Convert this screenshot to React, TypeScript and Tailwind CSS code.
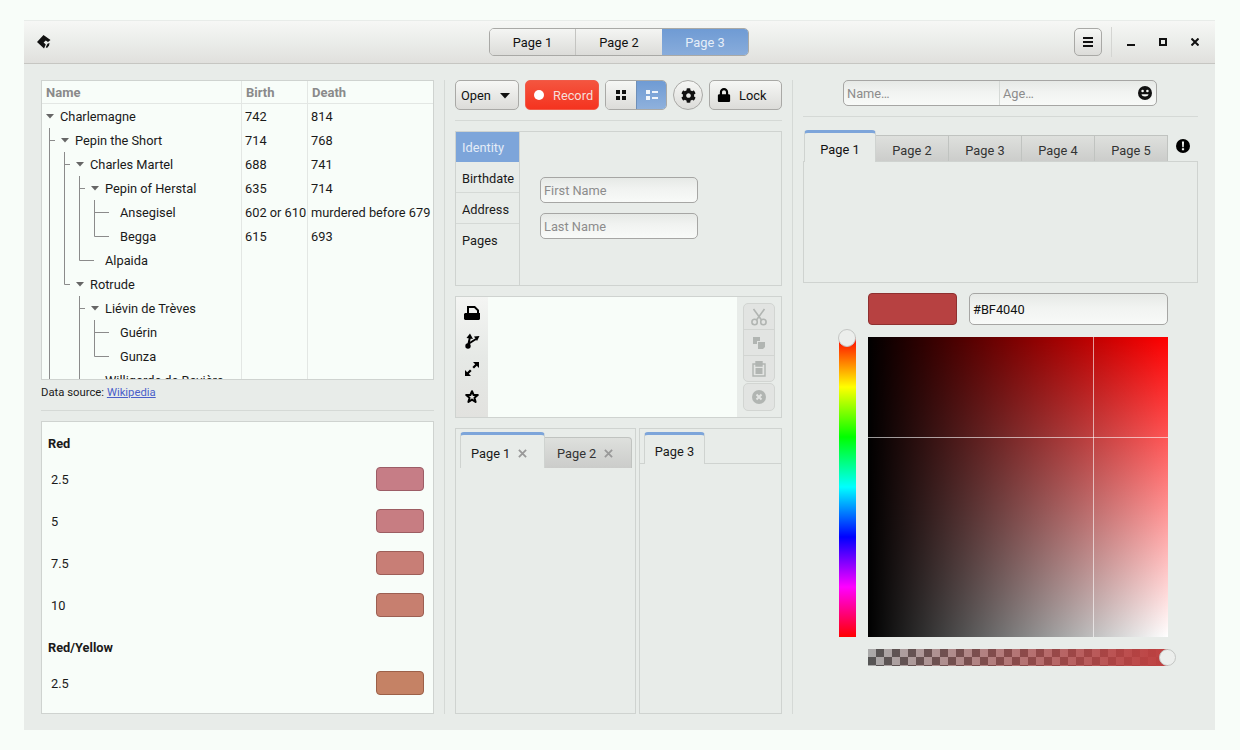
import { FaCog, FaLock } from 'react-icons/fa'

const btn =
  "flex items-center h-[30px] rounded-[5px] border border-[#a9a9a6] bg-[linear-gradient(to_bottom,#f6f7f5,#dcdcd9)] pt-[2px] text-[#111]"
const entry =
  "rounded-[5px] border border-[#a6a6a4] bg-[linear-gradient(to_bottom,#e6e9e6,#f1f3f1_45%,#f8faf8)] px-[3px] text-[12.8px] text-[#111] placeholder:text-[#8c8c8c] outline-none"
const inactiveTab =
  "flex items-center border border-b-0 border-[#c0c3c0] bg-[linear-gradient(to_bottom,#dee0dd,#cbccca)] text-[#333]"

type Guide = 'I' | 'T' | 'S' | 'L' | 'LS' | '' | 'arrow' | 'dash'

interface TreeRow {
  name: string
  birth?: string
  death?: string
  guides: Guide[]
}

const rows: TreeRow[] = [
  { name: 'Charlemagne', birth: '742', death: '814', guides: ['arrow'] },
  { name: 'Pepin the Short', birth: '714', death: '768', guides: ['S', 'arrow'] },
  { name: 'Charles Martel', birth: '688', death: '741', guides: ['I', 'S', 'arrow'] },
  { name: 'Pepin of Herstal', birth: '635', death: '714', guides: ['I', 'I', 'S', 'arrow'] },
  { name: 'Ansegisel', birth: '602 or 610', death: 'murdered before 679', guides: ['I', 'I', 'I', 'T', 'dash'] },
  { name: 'Begga', birth: '615', death: '693', guides: ['I', 'I', 'I', 'L', 'dash'] },
  { name: 'Alpaida', guides: ['I', 'I', 'L', 'dash'] },
  { name: 'Rotrude', guides: ['I', 'LS', 'arrow'] },
  { name: 'Liévin de Trèves', guides: ['I', '', 'S', 'arrow'] },
  { name: 'Guérin', guides: ['I', '', 'I', 'T', 'dash'] },
  { name: 'Gunza', guides: ['I', '', 'I', 'L', 'dash'] },
  { name: 'Willigarde de Bavière', guides: ['I', '', 'L', 'dash'] },
]

const swatches = [
  { label: '2.5', fill: 'bg-[#c67d86] border-[#9c5d66]' },
  { label: '5', fill: 'bg-[#c77d82] border-[#9c5d62]' },
  { label: '7.5', fill: 'bg-[#c87e76] border-[#9d5e58]' },
  { label: '10', fill: 'bg-[#c77f6f] border-[#9c5f52]' },
]

function GuideCell({ kind }: { kind: Guide }) {
  const line = '#8b8b8b'
  return (
    <svg width="15" height="24" viewBox="0 0 15 24" className="shrink-0">
      {(kind === 'I' || kind === 'T' || kind === 'S') && <path d="M6.5 0V24" stroke={line} />}
      {(kind === 'L' || kind === 'LS') && <path d="M6.5 0V12.5" stroke={line} />}
      {(kind === 'T' || kind === 'L') && <path d="M6.5 12.5H15" stroke={line} />}
      {(kind === 'S' || kind === 'LS') && <path d="M6.5 12.5H12" stroke={line} />}
      {kind === 'dash' && <path d="M0 12.5H6" stroke={line} />}
      {kind === 'arrow' && <path d="M3 10H11L7 14.5Z" fill="#666" />}
    </svg>
  )
}

function ScissorsIcon() {
  return (
    <svg width="16" height="18" viewBox="0 0 16 18" fill="none" stroke="#b1b5b2" strokeWidth="1.6">
      <path d="M2.5 1L10.5 12M13.5 1L5.5 12" />
      <circle cx="3.6" cy="14" r="2.7" />
      <circle cx="12.4" cy="14" r="2.7" />
    </svg>
  )
}

function TabClose() {
  return (
    <svg width="9" height="9" viewBox="0 0 10 10" fill="none" stroke="#999" strokeWidth="2">
      <path d="M1 1L9 9M9 1L1 9" />
    </svg>
  )
}

function App() {
  return (
    <div className="h-[750px] w-[1240px] overflow-hidden bg-[#f8fdf9] pt-[20px] pl-[24px] font-['Roboto',sans-serif] text-[12.8px] text-[#1a1a1a]">
      <div className="flex h-[710px] w-[1191px] flex-col bg-[#e8ece9]">
        {/* Title bar */}
        <header className="grid h-[44px] shrink-0 grid-cols-[1fr_auto_1fr] items-center border-t border-b border-t-[#e8ece9] border-b-[#c6c6c2] bg-[linear-gradient(to_bottom,#f6f7f5,#eceeeb_45%,#e0e0dd)]">
          <svg width="16" height="16" viewBox="0 0 16 16" fill="#111" className="ml-[12px]">
            <path d="M7.5 1L14.5 6L12 8L9.8 6.4L7.6 8.6L9.8 10.6L8 14.5L1 8Z" />
            <path d="M11.5 9.8L13.5 9L13 11.5L11 14L9.8 13.2Z" />
          </svg>
          <div className="mr-px flex h-[28px] w-[260px] overflow-hidden rounded-[5px] border border-[#a9a9a6]">
            <div className="flex w-[86px] items-center justify-center border-r border-[#c4c4c1] bg-[linear-gradient(to_bottom,#f4f5f3,#dcdcd9)] pt-[2px] text-[#111]">Page 1</div>
            <div className="flex w-[86px] items-center justify-center bg-[linear-gradient(to_bottom,#f4f5f3,#dcdcd9)] pt-[2px] text-[#111]">Page 2</div>
            <div className="flex flex-1 items-center justify-center bg-[linear-gradient(to_bottom,#6f9bd4,#88acdb)] pt-[2px] text-[#e6eef8]">Page 3</div>
          </div>
          <div className="flex items-center justify-end">
            <button className="flex h-[28px] w-[28px] items-center justify-center rounded-[5px] border border-[#a9a9a6] bg-[linear-gradient(to_bottom,#f6f7f5,#dcdcd9)]">
              <svg width="12" height="12" viewBox="0 0 12 12" fill="#111">
                <path d="M1 1H11V3H1ZM1 5H11V7H1ZM1 9H11V11H1Z" />
              </svg>
            </button>
            <div className="ml-[9px] h-[30px] w-px bg-[#d4d5d2]" />
            <svg width="8" height="8" viewBox="0 0 8 8" className="ml-[15px]" fill="#111"><path d="M0 6H8V8H0Z" /></svg>
            <svg width="8" height="8" viewBox="0 0 8 8" className="ml-[24px]" fill="none" stroke="#111" strokeWidth="2"><path d="M1 1H7V7H1Z" /></svg>
            <svg width="8" height="8" viewBox="0 0 8 8" className="mr-[16px] ml-[24px]" fill="none" stroke="#111" strokeWidth="2"><path d="M0.5 0.5L7.5 7.5M7.5 0.5L0.5 7.5" /></svg>
          </div>
        </header>

        <main className="flex min-h-0 flex-1 pt-[16px] pr-[17px] pb-[16px] pl-[17px]">
          {/* Left column */}
          <section className="flex w-[393px] shrink-0 flex-col">
            <div className="flex h-[300px] shrink-0 overflow-hidden border border-[#cfd3d0] bg-[#f8fdf9]">
              <div className="w-[200px] shrink-0 border-r border-[#e3e7e4]">
                <div className="flex h-[23px] items-center border-b border-[#e3e7e4] pt-[2px] pl-[4px] text-[13px] font-bold text-[#8a8a8a]">Name</div>
                <div className="pl-[1px]">
                  {rows.map(r => (
                    <div key={r.name} className="flex h-6 items-center">
                      {r.guides.map((g, i) => <GuideCell key={i} kind={g} />)}
                      <span className="ml-[2px] pt-[2px] whitespace-nowrap">{r.name}</span>
                    </div>
                  ))}
                </div>
              </div>
              <div className="w-[66px] shrink-0 border-r border-[#e3e7e4]">
                <div className="flex h-[23px] items-center border-b border-[#e3e7e4] pt-[2px] pl-[4px] text-[13px] font-bold text-[#8a8a8a]">Birth</div>
                {rows.map(r => (
                  <div key={r.name} className="flex h-6 items-center pt-[2px] pl-[3px] whitespace-nowrap">{r.birth}</div>
                ))}
              </div>
              <div className="min-w-0 flex-1">
                <div className="flex h-[23px] items-center border-b border-[#e3e7e4] pt-[2px] pl-[4px] text-[13px] font-bold text-[#8a8a8a]">Death</div>
                {rows.map(r => (
                  <div key={r.name} className="flex h-6 items-center pt-[2px] pl-[3px] whitespace-nowrap">{r.death}</div>
                ))}
              </div>
            </div>
            <p className="mt-[5px] h-[15px] text-[11.3px] leading-[15px]">
              Data source: <span className="text-[#4a5fc9] underline">Wikipedia</span>
            </p>
            <div className="mt-[10px] h-px shrink-0 bg-[#d5d9d6]" />
            <div className="mt-[10px] flex min-h-0 flex-1 flex-col overflow-hidden border border-[#cfd3d0] bg-[#f8fdf9] pr-[9px] pl-[6px]">
              <div className="mt-[14px] h-[16px] leading-[16px] font-bold">Red</div>
              <div className="mt-[15px] flex flex-col gap-[18px]">
                {swatches.map(s => (
                  <div key={s.label} className="flex h-[24px] items-center justify-between pl-[3px]">
                    <span className="pt-[2px]">{s.label}</span>
                    <div className={`h-[24px] w-[48px] rounded-[4px] border ${s.fill}`} />
                  </div>
                ))}
              </div>
              <div className="mt-[23px] h-[16px] leading-[16px] font-bold">Red/Yellow</div>
              <div className="mt-[15px] flex h-[24px] items-center justify-between pl-[3px]">
                <span className="pt-[2px]">2.5</span>
                <div className="h-[24px] w-[48px] rounded-[4px] border border-[#9c6048] bg-[#c58265]" />
              </div>
            </div>
          </section>

          <div className="mx-[10px] w-px shrink-0 bg-[#d5d9d6]" />

          {/* Middle column */}
          <section className="flex w-[327px] shrink-0 flex-col">
            <div className="flex h-[30px] shrink-0 items-center gap-[6px]">
              <button className={`${btn} w-[64px] gap-[9px] pl-[5px]`}>
                Open
                <svg width="10" height="6" viewBox="0 0 10 6" fill="#111"><path d="M0 0H10L5 5.5Z" /></svg>
              </button>
              <button className="flex h-[30px] w-[74px] items-center gap-[9px] rounded-[5px] border border-[#f05a48] bg-[linear-gradient(to_bottom,#f4553f,#f5331f)] pl-[8px] text-[#f5dfd9]">
                <span className="h-[10px] w-[10px] rounded-full bg-white" />
                <span className="pt-[2px]">Record</span>
              </button>
              <div className="flex h-[30px] w-[62px] overflow-hidden rounded-[5px] border border-[#a9a9a6]">
                <div className="flex w-[30px] items-center justify-center bg-[linear-gradient(to_bottom,#f6f7f5,#dcdcd9)]">
                  <svg width="10" height="10" viewBox="0 0 10 10" fill="#111"><path d="M0 0H4V4H0ZM6 0H10V4H6ZM0 6H4V10H0ZM6 6H10V10H6Z" /></svg>
                </div>
                <div className="flex flex-1 items-center justify-center border-l border-[#6e8fb8] bg-[linear-gradient(to_bottom,#6f9bd4,#8fb1dc)]">
                  <svg width="12" height="10" viewBox="0 0 12 10" fill="#f2f6fb"><path d="M0 0H4V4H0ZM0 6H4V10H0ZM6 1H12V3H6ZM6 7H12V9H6Z" /></svg>
                </div>
              </div>
              <button className="flex h-[30px] w-[30px] items-center justify-center rounded-full border border-[#a9a9a6] bg-[linear-gradient(to_bottom,#f6f7f5,#dcdcd9)]">
                <FaCog size={15} color="#111" />
              </button>
              <button className={`${btn} w-[73px] pl-[7px]`}>
                <span className="mt-[-2px]"><FaLock size={14} color="#000" /></span>
                <span className="ml-[8px]">Lock</span>
              </button>
            </div>
            <div className="mt-[10px] h-px shrink-0 bg-[#d5d9d6]" />

            <div className="mt-[10px] flex h-[155px] shrink-0 border border-[#cfd3d0]">
              <div className="w-[64px] shrink-0 border-r border-[#cfd3d0]">
                <div className="flex h-[30px] items-center bg-[#7da5da] pt-[2px] pl-[6px] text-[#e4ecf7]">Identity</div>
                <div className="flex h-[31px] items-center border-b border-[#d5d9d6] pt-[3px] pl-[6px]">Birthdate</div>
                <div className="flex h-[31px] items-center border-b border-[#d5d9d6] pt-[3px] pl-[6px]">Address</div>
                <div className="flex h-[31px] items-center pt-[2px] pl-[6px]">Pages</div>
              </div>
              <div className="flex flex-1 flex-col justify-center gap-[10px] pb-[2px] pl-[20px]">
                <input className={`${entry} h-[26px] w-[158px] pt-[2px]`} placeholder="First Name" />
                <input className={`${entry} h-[26px] w-[158px] pt-[2px]`} placeholder="Last Name" />
              </div>
            </div>

            <div className="mt-[10px] flex h-[122px] shrink-0 border border-[#cfd3d0]">
              <div className="flex w-[32px] shrink-0 flex-col items-center bg-[linear-gradient(to_bottom,#f4f5f3,#e6e9e6_50%,#e2e2df)] pt-[2px]">
                <div className="flex h-[28px] items-center">
                  <svg width="16" height="16" viewBox="0 0 16 16" fill="#000">
                    <path fillRule="evenodd" d="M3 8V1H11L15 5V8H16V14L15 15H1L0 14V9L1 8ZM5 8H13V5.8L10.2 3H5Z" />
                  </svg>
                </div>
                <div className="flex h-[28px] items-center">
                  <svg width="16" height="16" viewBox="0 0 16 16" fill="#000">
                    <circle cx="4" cy="13" r="2.7" />
                    <path d="M4 13L6 4M5 10.5L12 6" stroke="#000" strokeWidth="2" fill="none" />
                    <path d="M2.5 5L6 0.5L9 6Z" />
                    <path d="M10 3.5L15.5 3L13 8Z" />
                  </svg>
                </div>
                <div className="flex h-[28px] items-center">
                  <svg width="16" height="16" viewBox="0 0 16 16" fill="#000">
                    <path d="M9 1H15V7L12.8 4.8L10 7.6L8.4 6L11.2 3.2ZM1 15V9L3.2 11.2L6 8.4L7.6 10L4.8 12.8L7 15Z" />
                  </svg>
                </div>
                <div className="flex h-[28px] items-center">
                  <svg width="16" height="16" viewBox="0 0 16 16" fill="none" stroke="#000" strokeWidth="2" strokeLinejoin="round">
                    <path d="M8 2.2L9.6 6H13.8L10.5 8.8L11.6 13L8 10.6L4.4 13L5.5 8.8L2.2 6H6.4Z" />
                  </svg>
                </div>
              </div>
              <div className="flex-1 bg-[#f8fdf9]" />
              <div className="flex w-[44px] shrink-0 flex-col items-center pt-[6px] pr-[1px]">
                <div className="flex w-[32px] flex-col overflow-hidden rounded-[5px] border border-[#d2d5d2] bg-[#e2e4e2]">
                  <div className="flex h-[26px] items-center justify-center border-b border-[#d2d5d2]"><ScissorsIcon /></div>
                  <div className="flex h-[26px] items-center justify-center border-b border-[#d2d5d2]">
                    <svg width="14" height="14" viewBox="0 0 14 14" fill="#b1b5b2"><path d="M1 1H8V5H5V8H1Z" /><path d="M6 6H13V11L11 13H6Z" /></svg>
                  </div>
                  <div className="flex h-[25px] items-center justify-center">
                    <svg width="14" height="16" viewBox="0 0 14 16" fill="none" stroke="#b1b5b2" strokeWidth="1.4"><path d="M1 3H13V15H1Z" /><path d="M4 5H10V0.8H4Z" fill="#b1b5b2" /><path d="M3.5 7H10.5V13H3.5Z" fill="#b1b5b2" stroke="none" /></svg>
                  </div>
                </div>
                <div className="mt-px flex h-[28px] w-[32px] items-center justify-center rounded-[5px] border border-[#d2d5d2] bg-[#e2e4e2]">
                  <svg width="14" height="14" viewBox="0 0 14 14"><circle cx="7" cy="7" r="7" fill="#b1b5b2" /><path d="M4.5 4.5L9.5 9.5M9.5 4.5L4.5 9.5" stroke="#e2e4e2" strokeWidth="2" /></svg>
                </div>
              </div>
            </div>

            <div className="mt-[10px] flex min-h-0 flex-1 gap-[3px]">
              <div className="w-[181px] shrink-0 border border-[#cfd3d0] pt-[3px] pl-[4px]">
                <div className="flex h-[36px] items-end">
                  <div className="flex h-[36px] w-[85px] items-center gap-[8px] rounded-t-[4px] border-x border-t-[3px] border-x-[#cfd3d0] border-t-[#7da5da] pt-[4px] pl-[10px]">
                    Page 1
                    <TabClose />
                  </div>
                  <div className={`${inactiveTab} h-[31px] w-[87px] gap-[8px] rounded-tr-[4px] border-l-0 pt-[1px] pl-[12px]`}>
                    Page 2
                    <TabClose />
                  </div>
                </div>
              </div>
              <div className="min-w-0 flex-1 border border-[#cfd3d0]">
                <div className="flex h-[35px] items-end border-b border-[#cfd3d0] pl-[4px]">
                  <div className="mb-[-1px] flex h-[32px] w-[61px] items-center justify-center rounded-t-[4px] border-x border-t-[3px] border-x-[#cfd3d0] border-t-[#7da5da] bg-[#e8ece9] pt-[5px]">Page 3</div>
                </div>
              </div>
            </div>
          </section>

          <div className="mx-[10px] w-px shrink-0 bg-[#d5d9d6]" />

          {/* Right column */}
          <section className="flex w-[395px] shrink-0 flex-col">
            <div className="ml-[40px] flex h-[26px] w-[314px] shrink-0 items-center rounded-[5px] border border-[#a6a6a4] bg-[linear-gradient(to_bottom,#e6e9e6,#f1f3f1_45%,#f8faf8)] text-[#8c8c8c]">
              <span className="w-[156px] border-r border-[#d5d9d6] pt-[2px] pl-[3px] leading-[22px]">Name…</span>
              <span className="flex-1 pt-[2px] pl-[3px] leading-[22px]">Age…</span>
              <svg width="14" height="14" viewBox="0 0 14 14" className="mr-[4px]">
                <circle cx="7" cy="7" r="7" fill="#111" />
                <circle cx="4.6" cy="5" r="1.3" fill="#f4f6f4" />
                <circle cx="9.4" cy="5" r="1.3" fill="#f4f6f4" />
                <path d="M3.5 8.3H10.5C10.2 9.6 9 10.6 7 10.6C5 10.6 3.8 9.6 3.5 8.3Z" fill="#f4f6f4" />
              </svg>
            </div>
            <div className="mt-[10px] h-px shrink-0 bg-[#d5d9d6]" />

            <div className="mt-[13px] flex h-[32px] shrink-0 items-end pl-px">
              <div className="relative z-10 flex h-[32px] w-[72px] items-center justify-center rounded-t-[4px] border-x border-t-[3px] border-x-[#cfd3d0] border-t-[#7da5da] bg-[#e8ece9] pt-[4px] text-[#111]">Page 1</div>
              {['Page 2', 'Page 3', 'Page 4', 'Page 5'].map(p => (
                <div key={p} className={`${inactiveTab} h-[27px] w-[73px] justify-center border-l-0 pt-[3px]`}>{p}</div>
              ))}
              <svg width="14" height="14" viewBox="0 0 14 14" className="mb-[9px] ml-[8px]">
                <circle cx="7" cy="7" r="7" fill="#000" />
                <path d="M5.9 2.6H8.1L7.7 8.2H6.3ZM5.9 9.2H8.1V11.3H5.9Z" fill="#f4f6f4" />
              </svg>
            </div>
            <div className="mt-[-1px] h-[122px] shrink-0 border border-[#cfd3d0]" />

            <div className="mt-[10px] flex shrink-0 pl-[65px]">
              <div className="h-[32px] w-[89px] rounded-[4px] border border-[#8e3030] bg-[#b74141]" />
              <input className={`${entry} ml-[12px] h-[32px] w-[199px]`} defaultValue="#BF4040" />
            </div>

            <div className="mt-[12px] flex shrink-0 pl-[36px]">
              <div className="relative h-[300px] w-[17px] bg-[linear-gradient(to_bottom,#f00,#ff0,#0f0,#0ff,#00f,#f0f,#f00)]">
                <div className="absolute top-[-8px] left-[-1px] h-[18px] w-[18px] rounded-full border border-[#c4c6c4] bg-[#eceeec]" />
              </div>
              <div className="relative ml-[12px] h-[300px] w-[300px] bg-[linear-gradient(to_right,#000,transparent),linear-gradient(to_bottom,#f00,#fff)]">
                <div className="absolute top-0 bottom-0 left-[225px] w-px bg-white/60" />
                <div className="absolute top-[100px] right-0 left-0 h-px bg-white/60" />
              </div>
            </div>

            <div className="relative mt-[12px] ml-[65px] h-[17px] w-[300px] shrink-0 bg-[linear-gradient(to_right,#bf404000,#bf4040),repeating-conic-gradient(#555_0_25%,#aaa_0_50%)] [background-size:100%_100%,16px_16px]">
              <div className="absolute top-0 left-[291px] h-[17px] w-[17px] rounded-full border border-[#c4c6c4] bg-[#eceeec]" />
            </div>
          </section>
        </main>
      </div>
    </div>
  )
}

export default App
